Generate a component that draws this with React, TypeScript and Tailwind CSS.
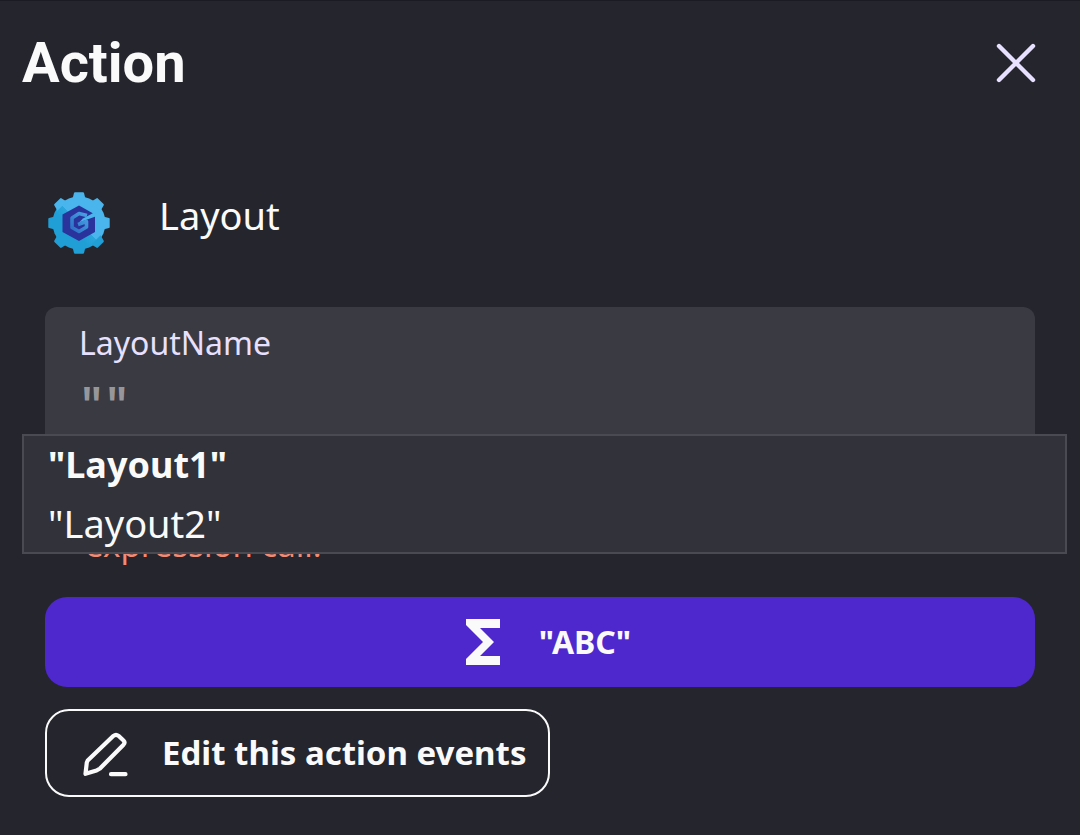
import { useState } from "react";

const layouts = ["Layout1", "Layout2"];

const toothAngles = [0, 45, 90, 135, 180, 225, 270, 315];

function CloseIcon() {
  return (
    <svg viewBox="0 0 40 40" className="size-10" fill="none" stroke="currentColor" strokeWidth="4.400" strokeLinecap="round">
      <path d="M3 3 37 37M37 3 3 37" />
    </svg>
  );
}

function GearLogo() {
  return (
    <svg viewBox="0 0 64 64" className="size-16 shrink-0" aria-hidden="true">
      <defs>
        <linearGradient id="gear" gradientUnits="userSpaceOnUse" x1="10" y1="54" x2="54" y2="10">
          <stop offset="0.35" stopColor="#209fd7" />
          <stop offset="0.5" stopColor="#2ba6dd" />
          <stop offset="0.51" stopColor="#49b5ec" />
        </linearGradient>
        <linearGradient id="letter" x1="0" y1="1" x2="1" y2="0">
          <stop offset="0" stopColor="#2b6fc6" />
          <stop offset="1" stopColor="#4aa3e4" />
        </linearGradient>
      </defs>
      <circle cx="32" cy="32" r="26.500" fill="url(#gear)" />
      {toothAngles.map((a) => (
        <path
          key={a}
          d="M25.500 8 27 2Q27.200 1.300 28 1.300H36Q36.800 1.300 37 2L38.500 8Z"
          fill={a < 135 || a === 315 ? "#49b5ec" : "#209fd7"}
          transform={`rotate(${a} 32 32)`}
        />
      ))}
      <path fill="#2a329c" d="M32 14.500 48 23.500V41L32 50 15.500 41V23.500z" />
      <path fill="#49b5ec" d="M49 20.500 36 27.500l-4 4 16.500-6z" />
      <path
        fill="none"
        stroke="url(#letter)"
        strokeWidth="3.600"
        strokeLinejoin="round"
        d="M40 24.500 32 22.500 25 27v9.500l7 4 7.500-4.500v-5.500L31 33.500"
      />
    </svg>
  );
}

function SigmaIcon() {
  return (
    <svg viewBox="0 0 36 46" className="h-[46px] w-9" fill="currentColor" aria-hidden="true">
      <path d="M1 0h34v9H15l14 14-14 14h20v9H1v-6l17-17L1 6z" />
    </svg>
  );
}

function PencilIcon() {
  return (
    <svg
      viewBox="0 0 48 48"
      className="size-12"
      fill="none"
      stroke="currentColor"
      strokeWidth="4.200"
      strokeLinecap="round"
      strokeLinejoin="round"
      aria-hidden="true"
    >
      <path d="M5.700 31.500 31.500 6.800Q34 4.800 36.500 6.800L41.500 11.500Q43.500 13.500 41.500 15.700L18 39.500 14.500 41.500 3.500 44.800 4.800 33.500ZM29 45.200H43.500" />
    </svg>
  );
}

export default function App() {
  const [value, setValue] = useState('""');

  return (
    <main className="min-h-screen border-t border-[#1b1b23] bg-[#25252e] pb-9 font-['Noto_Sans',sans-serif] text-[#fafafa]">
      <header className="flex h-[124px] items-center justify-between pr-11 pl-[22px]">
        <h1 className="font-[Roboto,sans-serif] text-[56px] leading-[64px] font-bold">Action</h1>
        <button type="button" aria-label="Close" className="text-[#e8e0ff]">
          <CloseIcon />
        </button>
      </header>

      <section className="px-[45px] pt-[66px]">
        <div className="flex items-start gap-12 pl-[2px]">
          <GearLogo />
          <h2 className="text-[38px] leading-[48px]">Layout</h2>
        </div>

        <div className="relative mt-[52px]">
          <div className="h-[180px] rounded-t-xl bg-[#3a3a42] px-[34px] pt-4">
            <label htmlFor="layout-name" className="block text-[32px] leading-10 text-[#e8e0ff]">
              LayoutName
            </label>
            <input
              id="layout-name"
              value={value}
              onChange={(e) => setValue(e.target.value)}
              className="mt-4 h-14 w-full bg-transparent font-['Liberation_Mono',monospace] text-[42px] font-bold text-[#97979b] outline-none"
            />
          </div>
          <p className="mt-[38px] pl-10 text-[33px] leading-10 text-[#f28b74]">expression call.</p>

          <ul className="absolute inset-x-0 top-[127px] -mr-8 -ml-[23px] border-2 border-[#4a4a53] bg-[#32323b]">
            {layouts.map((name, i) => (
              <li key={name}>
                <button
                  type="button"
                  onClick={() => setValue(`"${name}"`)}
                  className={`block w-full px-6 text-left leading-[58px] ${i === 0 ? "text-[36px] font-bold" : "text-[38px]"}`}
                >
                  "{name}"
                </button>
              </li>
            ))}
          </ul>
        </div>

        <button
          type="button"
          className="mt-8 flex h-[90px] w-full items-center justify-center gap-[38px] rounded-[22px] bg-[#4f28cd] pl-4 text-[32px] font-bold"
        >
          <SigmaIcon />
          "ABC"
        </button>
        <button
          type="button"
          className="mt-[22px] flex h-[88px] items-center gap-8 rounded-[24px] border-2 border-[#fafafa] pr-[22px] pl-[35px] text-[33px] font-bold"
        >
          <PencilIcon />
          Edit this action events
        </button>
      </section>
    </main>
  );
}
